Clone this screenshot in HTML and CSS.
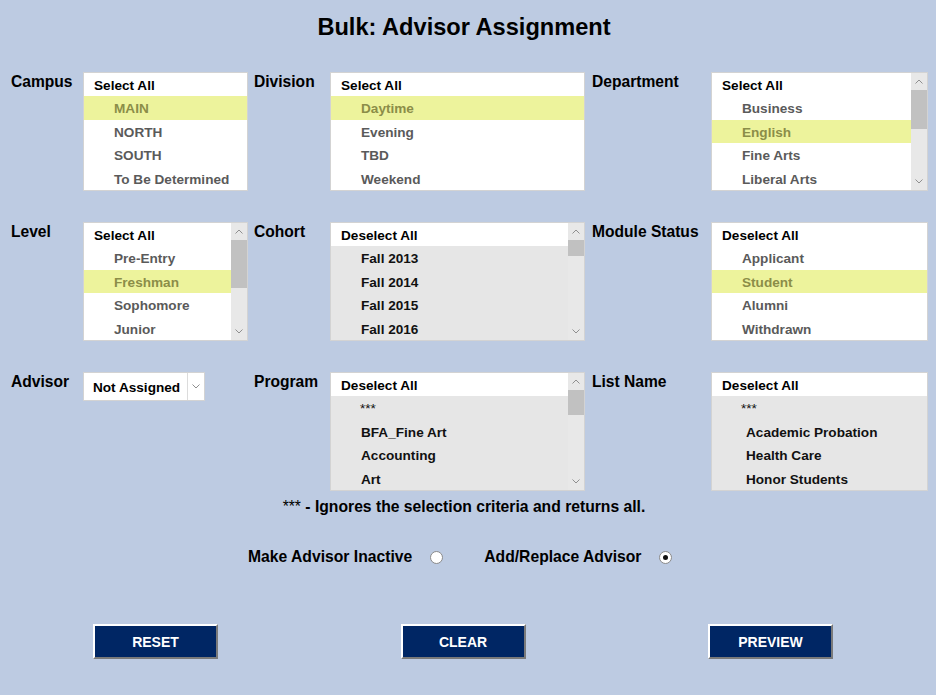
FILE: index.html
```html
<!DOCTYPE html>
<html>
<head>
<meta charset="utf-8">
<title>Bulk: Advisor Assignment</title>
<link rel="stylesheet" href="styles.css">
</head>
<body>
<div class="page">
  <h1 class="title">Bulk: Advisor Assignment</h1>

  <div class="grid">
    <div class="label">Campus</div>
    <div class="list w-s">
      <div class="rows">
        <div class="item head">Select All</div>
        <div class="item sel">MAIN</div>
        <div class="item">NORTH</div>
        <div class="item">SOUTH</div>
        <div class="item">To Be Determined</div>
      </div>
    </div>

    <div class="label">Division</div>
    <div class="list w-m">
      <div class="rows">
        <div class="item head">Select All</div>
        <div class="item sel">Daytime</div>
        <div class="item">Evening</div>
        <div class="item">TBD</div>
        <div class="item">Weekend</div>
      </div>
    </div>

    <div class="label">Department</div>
    <div class="list w-l">
      <div class="rows">
        <div class="item head">Select All</div>
        <div class="item">Business</div>
        <div class="item sel">English</div>
        <div class="item">Fine Arts</div>
        <div class="item">Liberal Arts</div>
      </div>
      <div class="sb">
        <div class="sb-btn"><svg width="8" height="5" viewBox="0 0 8 5"><polyline points="0.5,4.5 4,1 7.5,4.5"/></svg></div>
        <div class="thumb" style="height:39px"></div>
        <div class="track"></div>
        <div class="sb-btn"><svg width="8" height="5" viewBox="0 0 8 5"><polyline points="0.5,0.5 4,4 7.5,0.5"/></svg></div>
      </div>
    </div>

    <div class="label">Level</div>
    <div class="list w-s">
      <div class="rows">
        <div class="item head">Select All</div>
        <div class="item">Pre-Entry</div>
        <div class="item sel">Freshman</div>
        <div class="item">Sophomore</div>
        <div class="item">Junior</div>
      </div>
      <div class="sb">
        <div class="sb-btn"><svg width="8" height="5" viewBox="0 0 8 5"><polyline points="0.5,4.5 4,1 7.5,4.5"/></svg></div>
        <div class="thumb" style="height:48px"></div>
        <div class="track"></div>
        <div class="sb-btn"><svg width="8" height="5" viewBox="0 0 8 5"><polyline points="0.5,0.5 4,4 7.5,0.5"/></svg></div>
      </div>
    </div>

    <div class="label">Cohort</div>
    <div class="list w-m grey">
      <div class="rows">
        <div class="item head">Deselect All</div>
        <div class="item">Fall 2013</div>
        <div class="item">Fall 2014</div>
        <div class="item">Fall 2015</div>
        <div class="item">Fall 2016</div>
      </div>
      <div class="sb">
        <div class="sb-btn"><svg width="8" height="5" viewBox="0 0 8 5"><polyline points="0.5,4.5 4,1 7.5,4.5"/></svg></div>
        <div class="thumb" style="height:16px"></div>
        <div class="track"></div>
        <div class="sb-btn"><svg width="8" height="5" viewBox="0 0 8 5"><polyline points="0.5,0.5 4,4 7.5,0.5"/></svg></div>
      </div>
    </div>

    <div class="label">Module Status</div>
    <div class="list w-l">
      <div class="rows">
        <div class="item head">Deselect All</div>
        <div class="item">Applicant</div>
        <div class="item sel">Student</div>
        <div class="item">Alumni</div>
        <div class="item">Withdrawn</div>
      </div>
    </div>

    <div class="label">Advisor</div>
    <div class="dropdown">
      <div class="dd-text">Not Assigned</div>
      <div class="dd-btn"><svg width="8" height="5" viewBox="0 0 8 5"><polyline points="0.5,0.5 4,4 7.5,0.5"/></svg></div>
    </div>

    <div class="label">Program</div>
    <div class="list w-m grey">
      <div class="rows">
        <div class="item head">Deselect All</div>
        <div class="item stars">***</div>
        <div class="item">BFA_Fine Art</div>
        <div class="item">Accounting</div>
        <div class="item">Art</div>
      </div>
      <div class="sb">
        <div class="sb-btn"><svg width="8" height="5" viewBox="0 0 8 5"><polyline points="0.5,4.5 4,1 7.5,4.5"/></svg></div>
        <div class="thumb" style="height:25px"></div>
        <div class="track"></div>
        <div class="sb-btn"><svg width="8" height="5" viewBox="0 0 8 5"><polyline points="0.5,0.5 4,4 7.5,0.5"/></svg></div>
      </div>
    </div>

    <div class="label">List Name</div>
    <div class="list w-l grey">
      <div class="rows">
        <div class="item head">Deselect All</div>
        <div class="item stars">***</div>
        <div class="item deep">Academic Probation</div>
        <div class="item deep">Health Care</div>
        <div class="item deep">Honor Students</div>
      </div>
    </div>
  </div>

  <p class="note"><span class="note-stars">***</span> - Ignores the selection criteria and returns all.</p>

  <div class="radios">
    <div class="opt">
      <span>Make Advisor Inactive</span>
      <span class="radio"></span>
    </div>
    <div class="opt">
      <span>Add/Replace Advisor</span>
      <span class="radio on"></span>
    </div>
  </div>

  <div class="buttons">
    <button class="btn">RESET</button>
    <button class="btn">CLEAR</button>
    <button class="btn">PREVIEW</button>
  </div>
</div>
</body>
</html>
```

FILE: styles.css
```css
html, body {
  margin: 0;
  padding: 0;
  background: #bdcbe2;
}

body {
  font-family: "Liberation Sans", Arial, sans-serif;
  color: #000;
}

.page {
  width: 928px;
  height: 695px;
}

.title {
  margin: 0;
  padding-top: 13px;
  font-size: 23.6px;
  line-height: 28px;
  font-weight: bold;
  text-align: center;
}

.grid {
  margin-top: 31px;
  padding-left: 11px;
  display: grid;
  grid-template-columns: 72px 171px 76px 262px 119px 217px;
  grid-auto-rows: 119px;
  row-gap: 31px;
}

.label {
  font-size: 15.6px;
  font-weight: bold;
  line-height: 18px;
  padding-top: 1px;
  white-space: nowrap;
}

.list {
  box-sizing: border-box;
  height: 119px;
  border: 1px solid #d3d3d3;
  background: #fff;
  display: flex;
}

.w-s { width: 165px; }
.w-m { width: 255px; }
.w-l { width: 217px; }

.rows {
  flex: 1;
  min-width: 0;
  display: flex;
  flex-direction: column;
}

.item {
  height: 23.4px;
  line-height: 25px;
  padding-left: 30px;
  font-size: 13.6px;
  font-weight: bold;
  color: #5a5a5a;
  white-space: nowrap;
}

.item.head {
  padding-left: 10px;
  color: #000;
  background: #fff;
}

.item.sel {
  background: #edf39c;
  color: #8b8d48;
}

.grey .rows {
  background: #e6e6e6;
}

.grey .item {
  color: #111;
}

.grey .item.head {
  color: #000;
}

.item.stars {
  padding-left: 29px;
  font-weight: normal;
}

.item.deep {
  padding-left: 34px;
}

.sb {
  width: 16px;
  display: flex;
  flex-direction: column;
  background: #e8e8e8;
}

.sb-btn {
  height: 17px;
  display: flex;
  align-items: center;
  justify-content: center;
}

.sb svg polyline,
.dd-btn svg polyline {
  fill: none;
  stroke: #8f8f8f;
  stroke-width: 1;
}

.thumb {
  background: #c1c1c1;
}

.track {
  flex: 1;
}

.dropdown {
  box-sizing: border-box;
  width: 122px;
  height: 29px;
  border: 1px solid #d3d3d3;
  background: #fff;
  display: flex;
  align-self: start;
}

.dd-text {
  flex: 1;
  padding-left: 9px;
  font-size: 13.6px;
  font-weight: bold;
  line-height: 30px;
  white-space: nowrap;
}

.dd-btn {
  width: 16px;
  border-left: 1px solid #dcdcdc;
  display: flex;
  align-items: center;
  justify-content: center;
}

.note {
  margin: 7px 0 0;
  font-size: 15.7px;
  font-weight: bold;
  line-height: 18px;
  text-align: center;
}

.note-stars {
  font-weight: normal;
}

.radios {
  margin-top: 32px;
  padding-left: 248px;
  display: flex;
  align-items: center;
  font-size: 15.7px;
  font-weight: bold;
  line-height: 18px;
}

.opt {
  display: flex;
  align-items: center;
  gap: 18px;
}

.opt + .opt {
  margin-left: 41px;
}

.radio {
  box-sizing: border-box;
  width: 13px;
  height: 13px;
  border-radius: 50%;
  border: 1px solid #8a8a8a;
  background: #fff;
  display: flex;
  align-items: center;
  justify-content: center;
}

.radio.on::after {
  content: "";
  width: 5px;
  height: 5px;
  border-radius: 50%;
  background: #111;
}

.buttons {
  margin-top: 58px;
  padding: 0 95px 0 93px;
  display: flex;
  justify-content: space-between;
}

.btn {
  box-sizing: border-box;
  width: 125px;
  height: 35px;
  padding: 0;
  background: #002664;
  color: #fff;
  font-family: "Liberation Sans", Arial, sans-serif;
  font-size: 14px;
  font-weight: bold;
  border-style: solid;
  border-width: 2px;
  border-color: #ffffff #7a7a7a #7a7a7a #ffffff;
}
```
